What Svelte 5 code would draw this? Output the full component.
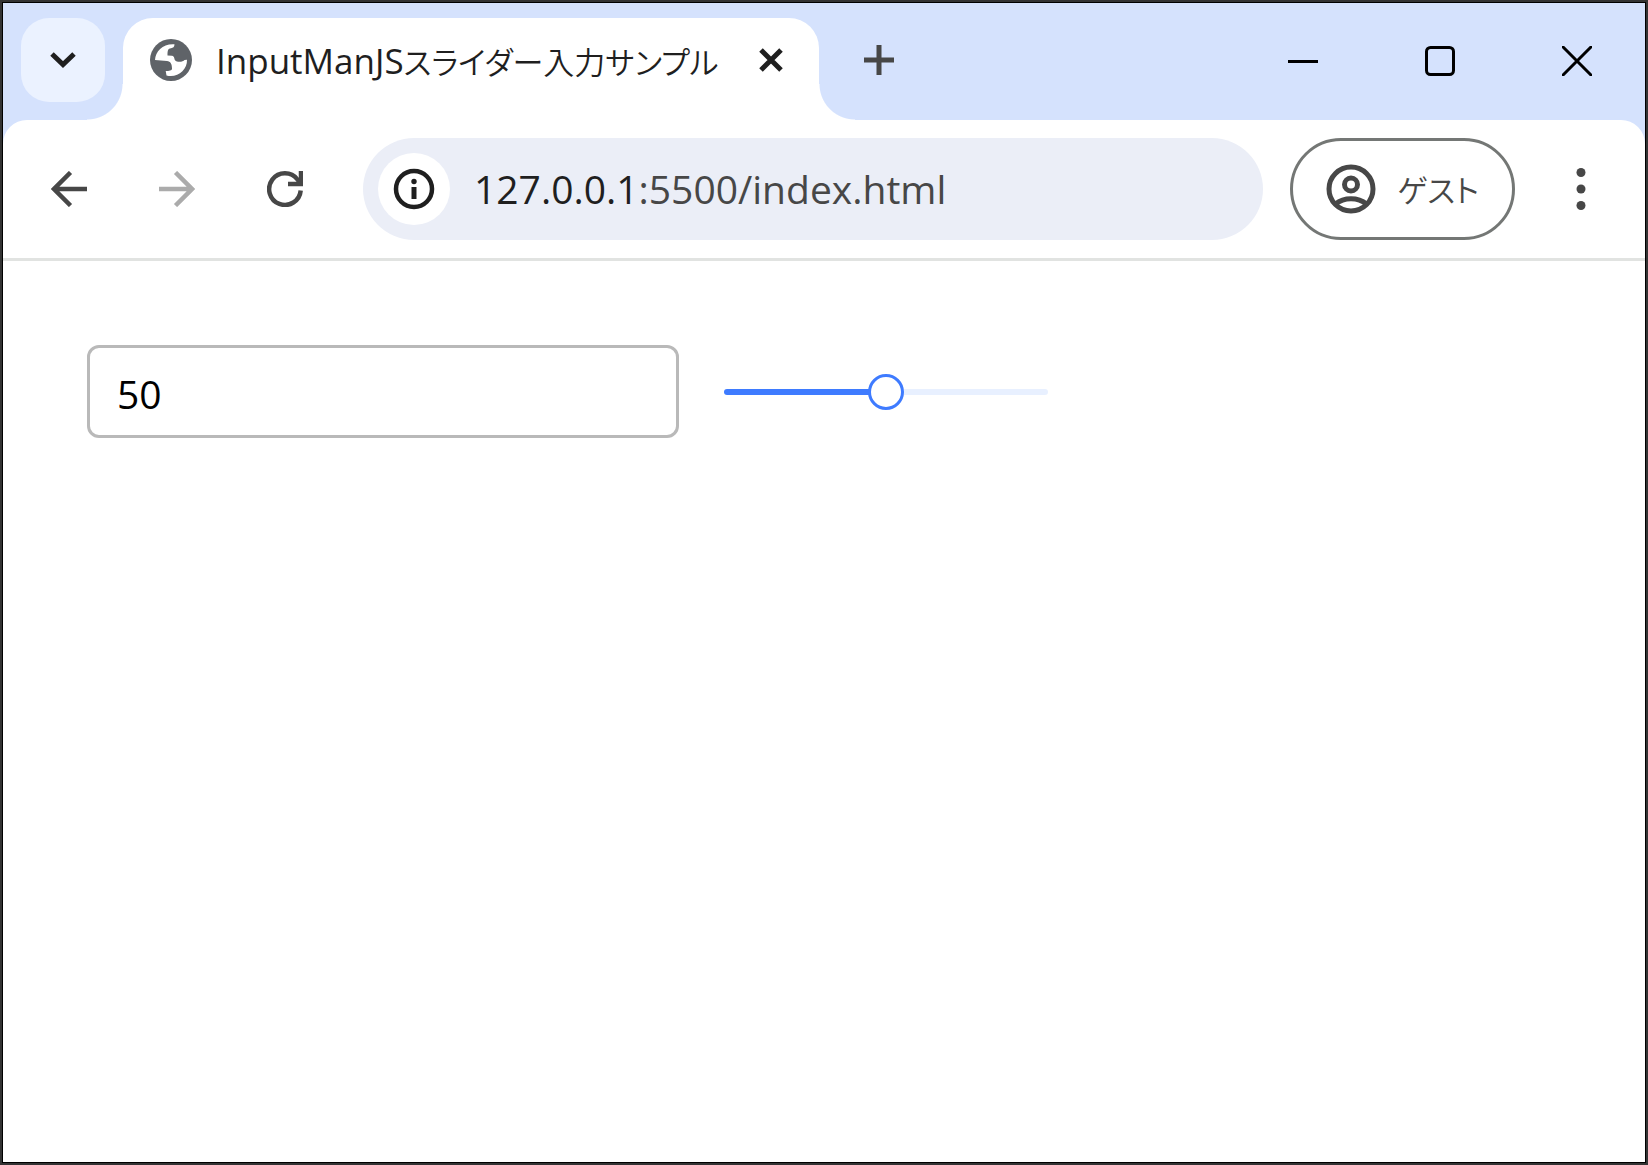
<script>
  let value = $state(50);
</script>

<div class="window">
  <header class="chrome">
    <div class="tabstrip">
      <button class="tab-search" aria-label="Search tabs">
        <svg width="28" height="18" viewBox="0 0 28 18"><path d="M3 3 14 13.5 25 3" fill="none" stroke="#1f1f1f" stroke-width="5" /></svg>
      </button>
      <div class="tab">
        <svg class="favicon" width="42" height="42" viewBox="0 0 42 42">
          <circle cx="21" cy="21" r="21" fill="#5f6368" />
          <path d="M5 21C5.500 12 13 4.500 24.500 5.300C24.500 8 23 9 21 9.200C18 9.500 17.500 11 17.500 16.500L22 16.700C24.500 17 24.300 20 25 21.300C27 23.500 33 23.200 34.500 21L37 20.800C37.500 31 27 39.500 16.500 36.500L15.700 32C19 31.800 22 32 22 29.500C22 25 20.500 22.300 17 22Z" fill="#fff" />
        </svg>
        <span class="title">InputManJS<span class="kana">スライダー入力サンプル</span></span>
        <button class="tab-close" aria-label="Close tab">
          <svg width="24" height="24" viewBox="0 0 24 24"><path d="M2 2 22 22M22 2 2 22" stroke="#1f1f1f" stroke-width="5" /></svg>
        </button>
      </div>
      <button class="new-tab" aria-label="New tab">
        <svg width="30" height="30" viewBox="0 0 30 30"><path d="M15 0V30M0 15H30" stroke="#474747" stroke-width="5" /></svg>
      </button>
      <div class="controls">
        <button aria-label="Minimize">
          <svg width="30" height="30" viewBox="0 0 30 30"><path d="M0 15.500H30" stroke="#000" stroke-width="3" /></svg>
        </button>
        <button aria-label="Maximize">
          <svg width="30" height="30" viewBox="0 0 30 30"><rect x="1.500" y="1.500" width="27" height="27" rx="4" fill="none" stroke="#000" stroke-width="3" /></svg>
        </button>
        <button aria-label="Close">
          <svg width="30" height="30" viewBox="0 0 30 30"><path d="M1 1 29 29M29 1 1 29" stroke="#000" stroke-width="3" stroke-linecap="square" /></svg>
        </button>
      </div>
    </div>

    <div class="toolbar">
      <nav class="nav">
        <button aria-label="Back">
          <svg width="36" height="36" viewBox="0 0 36 36"><path d="M36 18H3M19.500 1.500 3 18 19.500 34.500" fill="none" stroke="#474747" stroke-width="4.500" /></svg>
        </button>
        <button aria-label="Forward" disabled>
          <svg width="36" height="36" viewBox="0 0 36 36"><path d="M0 18H33M16.500 1.500 33 18 16.500 34.500" fill="none" stroke="#ababab" stroke-width="4.500" /></svg>
        </button>
        <button aria-label="Reload">
          <svg width="36" height="36" viewBox="0 0 36 36"><path d="M33.700 19.500A15.800 15.800 0 1 1 30.500 8.500L33 12" fill="none" stroke="#474747" stroke-width="4.500" /><path d="M21 13H34V0" fill="none" stroke="#474747" stroke-width="4.500" /></svg>
        </button>
      </nav>
      <div class="omnibox">
        <button class="site-info" aria-label="View site information">
          <svg width="42" height="42" viewBox="0 0 42 42"><circle cx="21" cy="21" r="18" fill="none" stroke="#1f1f1f" stroke-width="4.500" /><circle cx="21" cy="13.500" r="2.700" fill="#1f1f1f" /><path d="M21 19V31" stroke="#1f1f1f" stroke-width="5" /></svg>
        </button>
        <div class="url" role="textbox" tabindex="0" aria-label="Address" contenteditable="true" spellcheck="false"><span class="host">127.0.0.1</span>:5500/index.html</div>
      </div>
      <button class="profile">
        <svg width="50" height="50" viewBox="0 0 50 50" fill="none" stroke="#474747" stroke-width="5"><circle cx="25" cy="25" r="22" /><circle cx="25" cy="20.500" r="6.500" /><path d="M9.500 40C18 33 32 33 40.500 40" /></svg>
        <span>ゲスト</span>
      </button>
      <button class="menu" aria-label="Menu">
        <svg width="10" height="42" viewBox="0 0 10 42" fill="#474747"><circle cx="5" cy="4.500" r="4.500" /><circle cx="5" cy="21" r="4.500" /><circle cx="5" cy="37.500" r="4.500" /></svg>
      </button>
    </div>
  </header>

  <main class="page">
    <input class="number" type="text" inputmode="numeric" aria-label="Value" bind:value />
    <input class="slider" type="range" min="0" max="100" aria-label="Slider" bind:value style="--fill: {value}%" />
  </main>
</div>

<style>
  :global(body) {
    margin: 0;
    background: #000;
  }

  .window {
    box-sizing: border-box;
    min-height: 100vh;
    display: flex;
    flex-direction: column;
    border: 2px solid #333;
    padding: 1px;
    background: #000;
    font-family: "Open Sans", "Noto Sans CJK JP", sans-serif;
  }

  button {
    display: flex;
    align-items: center;
    justify-content: center;
    flex: none;
    margin: 0;
    padding: 0;
    border: 0;
    background: none;
    font: inherit;
  }

  svg {
    display: block;
    flex: none;
  }

  .chrome {
    background: #d5e2fd;
  }

  .tabstrip {
    display: flex;
    align-items: flex-start;
    padding: 15px 0 0 18px;
  }

  .tab-search {
    width: 84px;
    height: 84px;
    margin-right: 18px;
    border-radius: 28px;
    background: #ebf2ff;
  }

  .tab {
    position: relative;
    box-sizing: border-box;
    display: flex;
    align-items: center;
    flex: 0 1 696px;
    min-width: 0;
    height: 102px;
    padding: 0 36px 18px 27px;
    border-radius: 30px 30px 0 0;
    background: #fff;
  }

  .tab::before,
  .tab::after {
    content: "";
    position: absolute;
    bottom: 0;
    width: 36px;
    height: 36px;
  }

  .tab::before {
    right: 100%;
    background: radial-gradient(circle at 0 0, transparent 35px, #fff 36px);
  }

  .tab::after {
    left: 100%;
    background: radial-gradient(circle at 100% 0, transparent 35px, #fff 36px);
  }

  .title {
    flex: 1;
    min-width: 0;
    margin-left: 24px;
    padding-top: 2px;
    overflow: hidden;
    color: #1f1f1f;
    font-size: 35px;
    line-height: 48px;
    white-space: nowrap;
  }

  .kana {
    font-family: "Noto Sans CJK JP", sans-serif;
    font-size: 31px;
    font-weight: 350;
    font-feature-settings: "palt";
  }

  .new-tab {
    width: 84px;
    height: 84px;
    margin-left: 18px;
  }

  .controls {
    display: flex;
    margin-left: auto;
  }

  .controls button {
    width: 137px;
    height: 86px;
  }

  .toolbar {
    display: flex;
    align-items: center;
    padding: 18px 22px 18px 24px;
    border-bottom: 3px solid #e1e3e1;
    border-radius: 24px 24px 0 0;
    background: #fff;
  }

  .nav {
    display: flex;
    gap: 24px;
    margin-right: 36px;
  }

  .nav button,
  .menu {
    width: 84px;
    height: 84px;
  }

  .omnibox {
    box-sizing: border-box;
    display: flex;
    align-items: center;
    flex: 1;
    min-width: 0;
    height: 102px;
    padding: 0 15px;
    border-radius: 51px;
    background: #ebeef7;
  }

  .site-info {
    width: 72px;
    height: 72px;
    border-radius: 50%;
    background: #fff;
  }

  .url {
    flex: 1;
    min-width: 0;
    margin-left: 24px;
    overflow: hidden;
    outline: 0;
    color: #474747;
    font-size: 39px;
    line-height: 56px;
    white-space: nowrap;
  }

  .host {
    color: #1f1f1f;
  }

  .profile {
    box-sizing: border-box;
    gap: 21px;
    height: 102px;
    margin: 0 24px 0 27px;
    padding: 0 33px;
    border: 3px solid #747775;
    border-radius: 51px;
    color: #474747;
    font-family: "Noto Sans CJK JP", sans-serif;
    font-size: 31px;
    font-weight: 350;
    line-height: 48px;
    font-feature-settings: "palt";
  }

  .page {
    display: flex;
    align-items: flex-start;
    flex: 1;
    gap: 45px;
    padding: 84px;
    background: #fff;
  }

  .number {
    box-sizing: border-box;
    flex: 0 1 592px;
    min-width: 0;
    height: 93px;
    margin: 0;
    padding: 3px 27px 0;
    border: 3px solid #b9b9b9;
    border-radius: 12px;
    outline: 0;
    background: #fff;
    color: #000;
    font-family: "Open Sans", sans-serif;
    font-size: 39px;
  }

  .slider {
    appearance: none;
    flex: 0 1 324px;
    min-width: 0;
    height: 93px;
    margin: 0;
    background: none;
  }

  .slider::-webkit-slider-runnable-track {
    height: 6px;
    border-radius: 3px;
    background: linear-gradient(to right, #3e7bff var(--fill), #e8f0ff var(--fill));
  }

  .slider::-webkit-slider-thumb {
    appearance: none;
    box-sizing: border-box;
    width: 36px;
    height: 36px;
    margin-top: -15px;
    border: 3px solid #3e7bff;
    border-radius: 50%;
    background: #fff;
  }
</style>
